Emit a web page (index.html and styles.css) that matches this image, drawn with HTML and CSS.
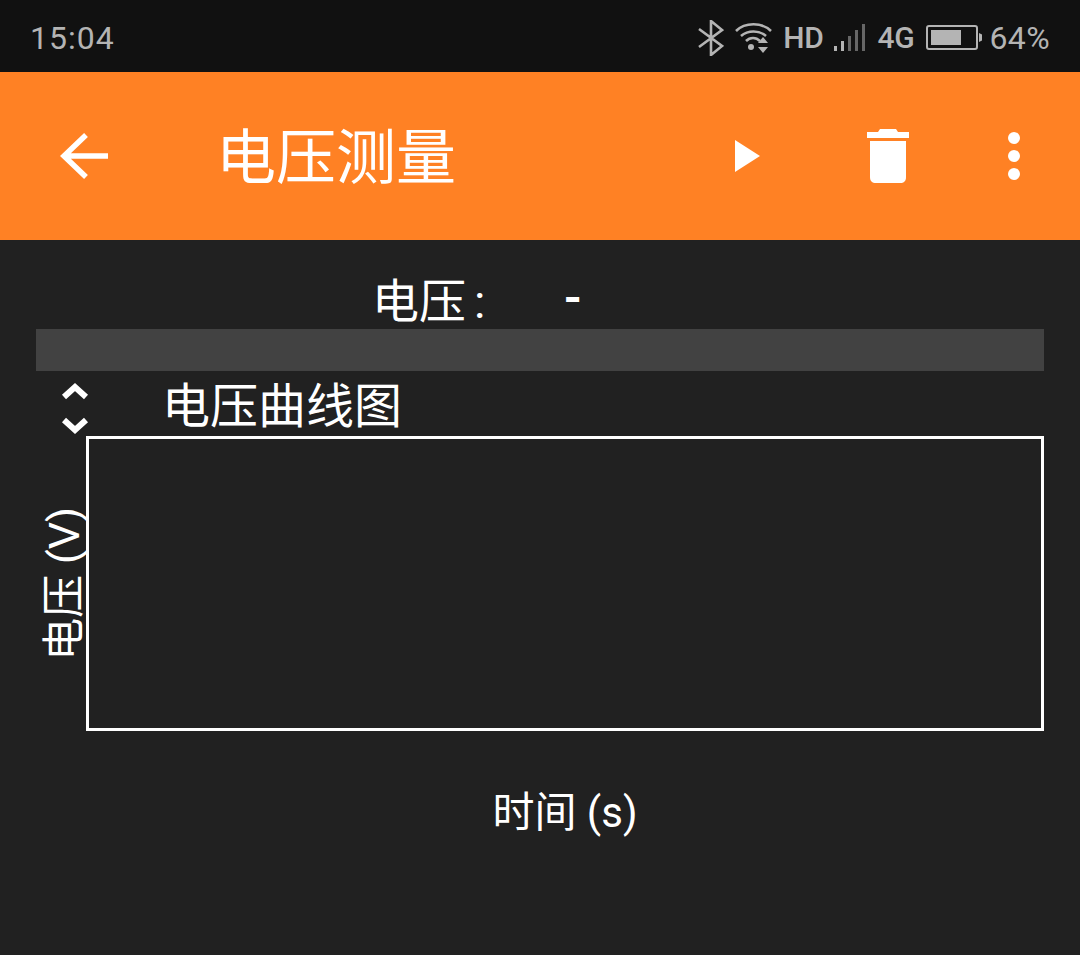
FILE: index.html
```html
<!DOCTYPE html>
<html lang="zh-CN">
<head>
  <meta charset="UTF-8">
  <meta name="viewport" content="width=device-width, initial-scale=1.0">
  <title>电压测量</title>
  <link rel="stylesheet" href="styles.css">
</head>
<body>

  <div class="status-bar">
    <span class="clock">15:04</span>
    <div class="status-icons">
      <svg class="ic-bt" width="26" height="36" viewBox="0 0 26 36"><path d="M1 9 L24 26 L13 35 L13 1 L24 10 L1 27" fill="none" stroke="#b4b4b4" stroke-width="2.6"/></svg>
      <svg class="ic-wifi" width="38" height="32" viewBox="0 0 38 32">
        <path d="M1 9 C10 0 27 0 36 9 M6 14 C13 8 24 8 31 14 M11 19 C15 15 21 15 25 19" fill="none" stroke="#b4b4b4" stroke-width="2.6"/>
        <circle cx="16" cy="25" r="3" fill="#b4b4b4"/>
        <path d="M28 15 L33 21 L23 21 Z M28 31 L33 25 L23 25 Z" fill="#b4b4b4"/>
      </svg>
      <span class="net hd">HD</span>
      <svg class="ic-signal" width="32" height="28" viewBox="0 0 32 28">
        <rect x="0" y="22" width="3" height="5" fill="#b4b4b4"/>
        <rect x="7" y="17" width="3" height="10" fill="#b4b4b4"/>
        <rect x="14" y="12" width="3" height="15" fill="#666"/>
        <rect x="21" y="6" width="3" height="21" fill="#666"/>
        <rect x="28" y="0" width="3" height="27" fill="#666"/>
      </svg>
      <span class="net four-g">4G</span>
      <svg class="ic-battery" width="56" height="25" viewBox="0 0 56 25">
        <rect x="1" y="1" width="50" height="23" rx="2" fill="none" stroke="#b4b4b4" stroke-width="2"/>
        <rect x="5" y="5" width="30" height="15" fill="#b4b4b4"/>
        <path d="M53 8 L56 9.5 L56 15.5 L53 17 Z" fill="#b4b4b4"/>
      </svg>
      <span class="battery-pct">64%</span>
    </div>
  </div>

  <header class="toolbar">
    <svg class="back" width="50" height="48" viewBox="0 0 50 48"><path d="M26 3 L4 24 L26 45 M4 24 L48 24" fill="none" stroke="#fff" stroke-width="5.5"/></svg>
    <h1 class="title">电压测量</h1>
    <div class="actions">
      <svg class="ic-play" width="25" height="32" viewBox="0 0 25 32"><path d="M0 0 L25 16 L0 32 Z" fill="#fff"/></svg>
      <svg class="ic-trash" width="42" height="54" viewBox="0 0 42 54">
        <path d="M0 3 L11 3 L13 0 L29 0 L31 3 L42 3 L42 9 L0 9 Z" fill="#fff"/>
        <path d="M3 12 L39 12 L39 48 C39 52 37 54 33 54 L9 54 C5 54 3 52 3 48 Z" fill="#fff"/>
      </svg>
      <svg class="ic-more" width="14" height="50" viewBox="0 0 14 50">
        <circle cx="7" cy="7" r="6" fill="#fff"/>
        <circle cx="7" cy="25" r="6" fill="#fff"/>
        <circle cx="7" cy="43" r="6" fill="#fff"/>
      </svg>
    </div>
  </header>

  <main class="content">
    <div class="reading">
      <span class="reading-label">电压<span class="colon">:</span></span>
      <span class="reading-value">-</span>
    </div>
    <div class="divider"></div>

    <div class="chart-head">
      <div class="toggle">
        <svg width="28" height="20" viewBox="0 0 28 20"><path d="M3 16 L14 6 L25 16" fill="none" stroke="#fff" stroke-width="6"/></svg>
        <svg width="28" height="20" viewBox="0 0 28 20"><path d="M3 4 L14 14 L25 4" fill="none" stroke="#fff" stroke-width="6"/></svg>
      </div>
      <span class="chart-title">电压曲线图</span>
    </div>

    <div class="chart">
      <div class="y-axis"><span>电压 (V)</span></div>
      <div class="plot"></div>
      <div class="x-axis">时间 (s)</div>
    </div>
  </main>

</body>
</html>
```

FILE: styles.css
```css
* {
  box-sizing: border-box;
}

html, body {
  height: 100%;
}

body {
  margin: 0;
  font-family: Roboto, "Noto Sans CJK SC", sans-serif;
  background-color: #212121;
  color: #fff;
  display: flex;
  flex-direction: column;
  overflow: hidden;
}

svg {
  display: block;
  flex: none;
}

.status-bar {
  height: 72px;
  background: #111;
  color: #b4b4b4;
  display: flex;
  align-items: center;
  justify-content: space-between;
  padding: 3px 30px 0 30px;
}

.clock {
  font-size: 32px;
  letter-spacing: 1px;
}

.status-icons {
  display: flex;
  align-items: center;
}

.net {
  font-size: 30px;
  font-weight: 500;
  letter-spacing: -0.3px;
}

.ic-bt {
  margin-right: -3px;
}

.ic-wifi {
  margin-left: 14px;
}

.hd {
  margin-left: 10px;
}

.ic-signal {
  margin-left: 10px;
}

.four-g {
  margin-left: 12px;
}

.ic-battery {
  margin-left: 12px;
}

.battery-pct {
  font-size: 32px;
  margin-left: 7px;
  letter-spacing: 0.4px;
}

.toolbar {
  height: 168px;
  background: #ff8124;
  display: flex;
  align-items: center;
  padding-left: 60px;
  padding-right: 59px;
}

.title {
  margin: 6px 0 0 106px;
  font-size: 60px;
  font-weight: 400;
  line-height: 1;
}

.actions {
  margin-left: auto;
  display: flex;
  align-items: center;
}

.ic-play {
  margin-right: 107px;
}

.ic-trash {
  margin-right: 98px;
}

.content {
  flex: 1;
  padding: 0 36px;
  display: flex;
  flex-direction: column;
}

.reading {
  height: 89px;
  display: flex;
  align-items: center;
  padding-left: 336px;
  font-size: 47px;
  padding-top: 26px;
}

.colon {
  margin-left: 8px;
}

.reading-value {
  margin-left: 78px;
  font-weight: 700;
}

.divider {
  height: 42px;
  background: #424242;
}

.chart-head {
  height: 65px;
  display: flex;
  align-items: center;
}

.toggle {
  width: 78px;
  margin-left: 25px;
  display: flex;
  flex-direction: column;
  gap: 15px;
  padding-top: 10px;
}

.chart-title {
  margin-left: 23px;
  font-size: 48px;
  line-height: 1;
  margin-top: 6px;
}

.chart {
  display: grid;
  grid-template-columns: 50px 958px;
  grid-template-rows: 295px auto;
}

.y-axis {
  display: flex;
  align-items: center;
  justify-content: flex-end;
  font-size: 43px;
  min-width: 0;
}

.y-axis span {
  writing-mode: vertical-rl;
  text-orientation: sideways;
  transform: rotate(180deg);
  line-height: 44px;
  white-space: nowrap;
}

.plot {
  border: 3px solid #fff;
}

.x-axis {
  grid-column: 2;
  text-align: center;
  font-size: 42px;
  line-height: 54px;
  margin-top: 55px;
}
```
